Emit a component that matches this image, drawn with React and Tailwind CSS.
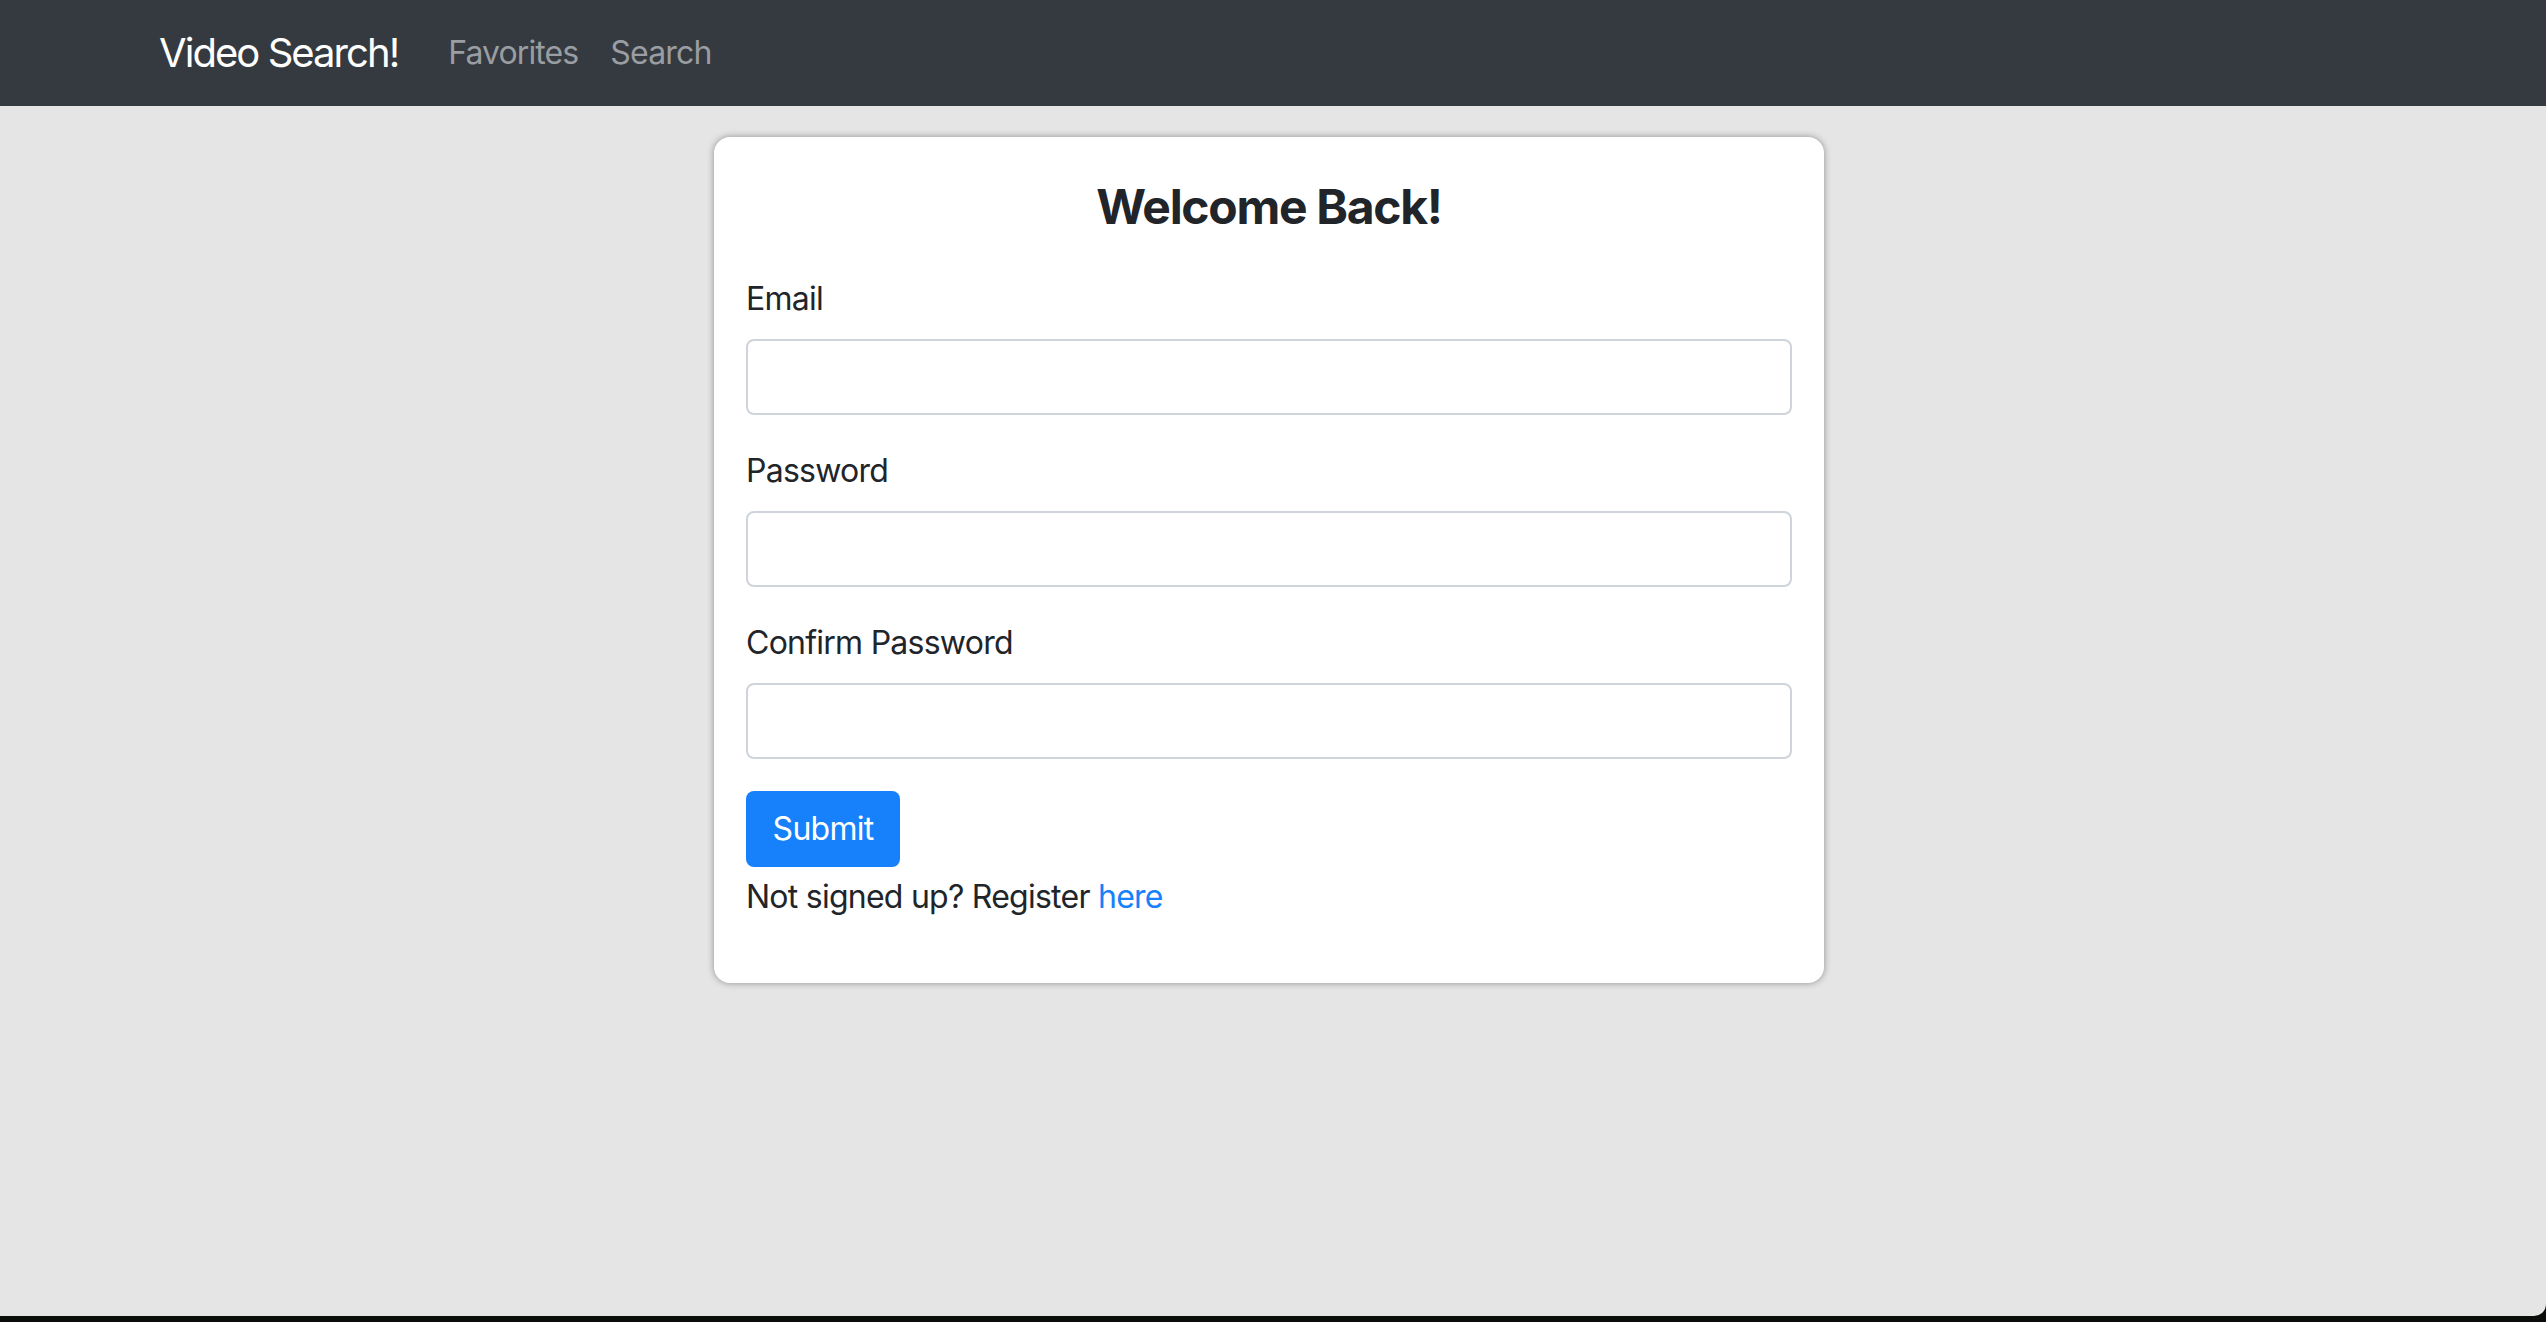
import React from "react";

export default function App() {
  const font = { fontFamily: "Inter, 'Noto Sans', 'Liberation Sans', sans-serif" };
  return (
    <div className="w-[2546px] h-[1322px] bg-[#0b0d0b] overflow-hidden" style={font}>
      <div className="h-[1316px] bg-[#e5e5e5] rounded-br-[12px] flex flex-col">
        <nav className="h-[106px] bg-[#343a40] flex items-center pl-[159px]">
          <span className="text-[40px] leading-[60px] text-white tracking-[-1.95px] mr-[50px]">Video Search!</span>
          <span className="text-[32px] leading-[48px] text-[#9a9da1] tracking-[-0.9px] mr-[32px]">Favorites</span>
          <span className="text-[32px] leading-[48px] text-[#9a9da1] tracking-[-0.8px]">Search</span>
        </nav>
        <div className="pt-[31px]">
          <div className="w-[1110px] ml-[714px] bg-white rounded-[16px] shadow-[0_0_7px_rgba(0,0,0,0.38)] px-[32px] pt-[41px] pb-[62px] text-[#212529] tracking-[-0.75px]">
            <h1 className="text-[48px] leading-[58px] font-bold text-center mb-[39px] tracking-[-1.3px]">Welcome Back!</h1>
            <form onSubmit={(e) => e.preventDefault()}>
              <div className="mb-[32px]">
                <label className="block text-[32px] leading-[48px] mb-[16px]">Email</label>
                <input type="email" className="block w-full h-[76px] border-2 border-[#ced4da] rounded-[8px] px-[24px] text-[32px] outline-none" />
              </div>
              <div className="mb-[32px]">
                <label className="block text-[32px] leading-[48px] mb-[16px]">Password</label>
                <input type="password" className="block w-full h-[76px] border-2 border-[#ced4da] rounded-[8px] px-[24px] text-[32px] outline-none" />
              </div>
              <div className="mb-[32px]">
                <label className="block text-[32px] leading-[48px] mb-[16px]">Confirm Password</label>
                <input type="password" className="block w-full h-[76px] border-2 border-[#ced4da] rounded-[8px] px-[24px] text-[32px] outline-none" />
              </div>
              <button type="submit" className="h-[76px] w-[154px] bg-[#1780fb] text-white text-[32px] leading-[48px] rounded-[8px] flex items-center justify-center">Submit</button>
            </form>
            <p className="text-[32px] leading-[48px] mt-[6px]">
              Not signed up? Register <a href="#" className="text-[#1780fb]">here</a>
            </p>
          </div>
        </div>
      </div>
    </div>
  );
}
